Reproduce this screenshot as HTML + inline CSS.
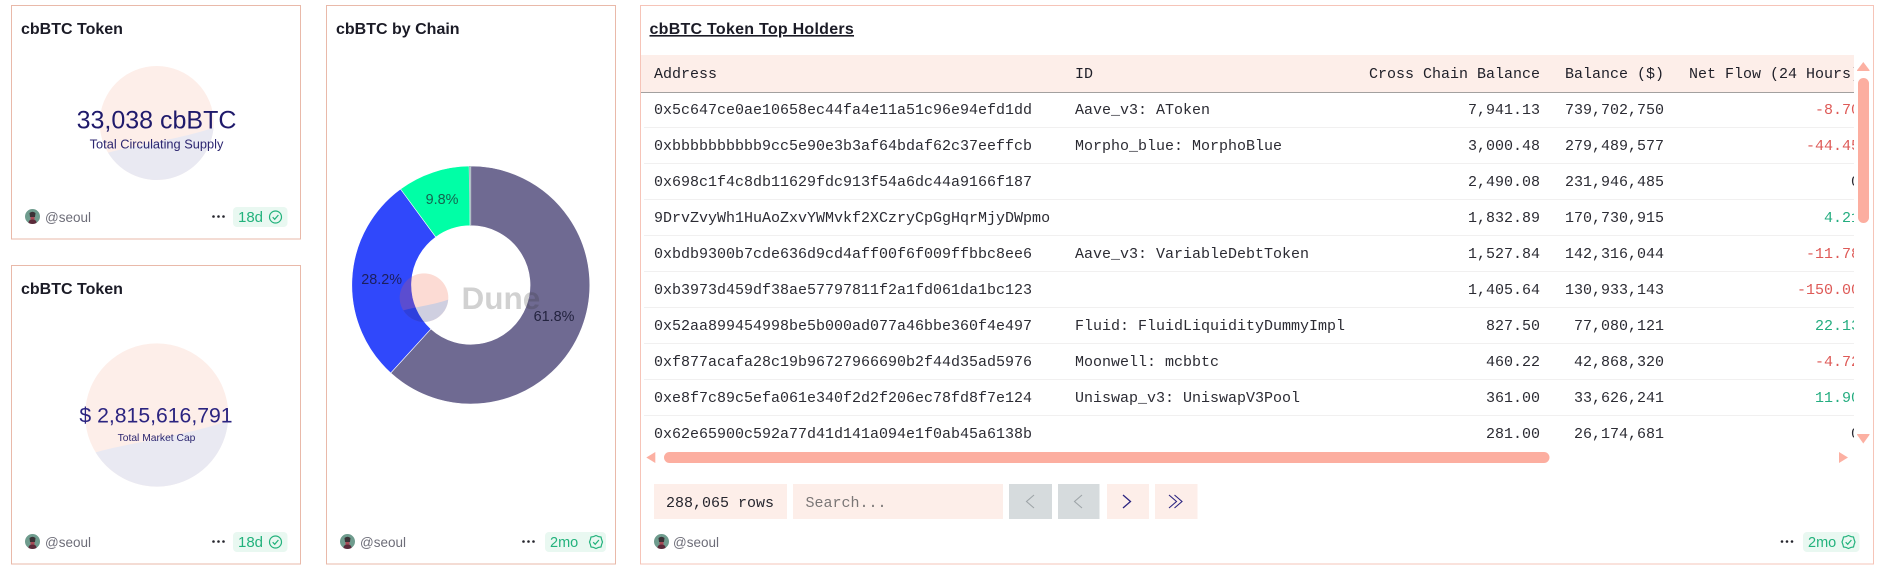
<!DOCTYPE html>
<html>
<head>
<meta charset="utf-8">
<style>
html,body{margin:0;padding:0;background:#fff;width:1882px;height:565px;overflow:hidden}
svg.page{position:absolute;left:0;top:0}
svg text{font-family:"Liberation Sans",sans-serif}
svg text.m{font-family:"Liberation Mono",monospace;font-size:15px}
.ttl{font-size:16px;font-weight:700;fill:#1b1b26}
.usr{font-size:13.5px;fill:#6d6d78}
.bdg{font-size:14.5px;fill:#22b27c}
#tbl{position:absolute;left:641px;top:55px;width:1213px;height:397px;overflow:hidden;font:15px/36px "Liberation Mono",monospace;color:#2b2b33}
#hd{position:absolute;left:0;top:0;width:1213px;height:37px;background:#fdeee9;border-bottom:1.5px solid #a3a09f;color:#1f1f28}
.r{position:absolute;left:3px;width:1213px;height:35px;border-bottom:1px solid #f1f0f0}
#tbl span{position:absolute;top:1px;white-space:nowrap}
.hs{line-height:37px}
.a{left:10px}.i{left:431px}.c{right:317px}.b{right:193px}.n{right:-3px}
.ha{left:13px}.hi{left:434px}.hc{right:314px}.hb{right:190px}.hn{right:-6px}
.neg{color:#de5a57}.pos{color:#25ad80}
</style>
</head>
<body>
<svg class="page" width="1882" height="565" viewBox="0 0 1882 565">
<defs>
<g id="logo">
<circle cx="0" cy="0" r="100" fill="#fdeee9"/>
<path d="M-85.3,52.2 C-45,40 45,28 99.7,8 A100,100 0 0 1 -85.3,52.2 Z" fill="#e9e9f2"/>
</g>
<g id="av">
<circle cx="7.5" cy="7.5" r="7.5" fill="#6f9c8e"/>
<path d="M4.5 4 Q7.5 1.5 10.5 4 L10 8 L5 8 Z" fill="#3b3236"/>
<path d="M5.5 8 H9.5 V11 H5.5 Z" fill="#a84a56"/>
<path d="M3.5 14 Q3.5 10.5 7.5 10.5 Q11.5 10.5 11.5 14 Q7.5 16 3.5 14 Z" fill="#5b2a3a"/>
</g>
<g id="dots" fill="#24242c">
<circle cx="0" cy="0" r="1.3"/><circle cx="5" cy="0" r="1.3"/><circle cx="10" cy="0" r="1.3"/>
</g>
<g id="chk" fill="none" stroke="#22b27c" stroke-width="1.2">
<circle cx="0" cy="0" r="6"/>
<path d="M-2.8 0.2 L-0.8 2.3 L2.9 -2"/>
</g>
<g id="chk2" fill="none" stroke="#22b27c" stroke-width="1.2">
<path d="M0 -6.5 L2.4 -5.4 L5 -5 L5.6 -2.5 L6.5 0 L5.6 2.5 L5 5 L2.4 5.4 L0 6.5 L-2.4 5.4 L-5 5 L-5.6 2.5 L-6.5 0 L-5.6 -2.5 L-5 -5 L-2.4 -5.4 Z"/>
<path d="M-2.8 0.2 L-0.8 2.3 L2.9 -2"/>
</g>
</defs>

<!-- cards -->
<rect x="11.5" y="5.5" width="289" height="233.5" fill="#fff" stroke="#e9b9a9"/>
<rect x="11.5" y="265.5" width="289" height="298.5" fill="#fff" stroke="#e9b9a9"/>
<rect x="326.5" y="5.5" width="289" height="558.5" fill="#fff" stroke="#e9b9a9"/>
<rect x="640.5" y="5.5" width="1233" height="558.5" fill="#fff" stroke="#f6c4b8"/>

<!-- card 1 -->
<text class="ttl" x="21" y="34">cbBTC Token</text>
<use href="#logo" transform="translate(156.7 123) scale(.57)"/>
<text x="156.5" y="128.5" text-anchor="middle" font-size="25" fill="#1f1a6b">33,038 cbBTC</text>
<text x="156.5" y="148.5" text-anchor="middle" font-size="12.8" fill="#2c2670">Total Circulating Supply</text>
<use href="#av" x="25" y="209"/>
<text class="usr" x="45" y="222">@seoul</text>
<use href="#dots" x="213.5" y="216.5"/>
<rect x="233" y="207" width="54.5" height="20" rx="4" fill="#e9f8f1"/>
<text class="bdg" x="238" y="222" font-size="15" style="font-size:15px">18d</text>
<use href="#chk" x="275.5" y="217"/>

<!-- card 2 -->
<text class="ttl" x="21" y="294">cbBTC Token</text>
<use href="#logo" transform="translate(156.7 415) scale(.716)"/>
<text x="156" y="422.5" text-anchor="middle" font-size="21.2" fill="#2b2480">$ 2,815,616,791</text>
<text x="156.5" y="441" text-anchor="middle" font-size="10.3" fill="#2c2670">Total Market Cap</text>
<use href="#av" x="25" y="534"/>
<text class="usr" x="45" y="547">@seoul</text>
<use href="#dots" x="213.5" y="541.5"/>
<rect x="233" y="532" width="54.5" height="20" rx="4" fill="#e9f8f1"/>
<text class="bdg" x="238" y="547" style="font-size:15px">18d</text>
<use href="#chk" x="275.5" y="542"/>

<!-- card 3 -->
<text class="ttl" x="336" y="34">cbBTC by Chain</text>
<g stroke="#fff" stroke-width=".6">
<path d="M470.8 166 A119 119 0 1 1 390.7 373 L430.9 328.9 A59.3 59.3 0 1 0 470.8 225.7 Z" fill="#6f6a92"/>
<path d="M390.7 373 A119 119 0 0 1 400.5 189 L435.8 237.1 A59.3 59.3 0 0 0 430.9 328.9 Z" fill="#3048fb"/>
<path d="M400.5 189 A119 119 0 0 1 469.1 166 L470 225.7 A59.3 59.3 0 0 0 435.8 237.1 Z" fill="#00ffa6"/>
</g>
<path d="M469.1 166 L470.8 166 L470.8 225.7 L470 225.7 Z" fill="#9db1b8"/>
<text x="554" y="321" text-anchor="middle" font-size="14.4" fill="#23233f">61.8%</text>
<text x="381.7" y="284" text-anchor="middle" font-size="14.4" fill="#1c1f5e">28.2%</text>
<text x="442" y="204" text-anchor="middle" font-size="14.4" fill="#14634f">9.8%</text>
<g opacity=".22">
<circle cx="424" cy="297.7" r="24.3" fill="#f4603e"/>
<path d="M403.3 310.4 C413 307.4 435 304.5 448.2 299.6 A24.3 24.3 0 0 1 403.3 310.4 Z" fill="#2b2875"/>
<text x="461.5" y="309" font-size="31.5" font-weight="700" fill="#333">Dune</text>
</g>
<use href="#av" x="340" y="534"/>
<text class="usr" x="360" y="547">@seoul</text>
<use href="#dots" x="523.5" y="541.5"/>
<rect x="545" y="532" width="61" height="20" rx="4" fill="#e9f8f1"/>
<text class="bdg" x="550" y="547">2mo</text>
<use href="#chk2" x="596" y="542"/>

<!-- card 4 -->
<text class="ttl" x="649.5" y="34" text-decoration="underline" style="letter-spacing:.26px">cbBTC Token Top Holders</text>

<!-- scrollbars -->
<path d="M1863.3 62 L1869.4 70 Q1870 71 1869 71 H1857.6 Q1856.6 71 1857.2 70 Z" fill="#fcb0a2"/>
<rect x="1858" y="78" width="11" height="145" rx="5.5" fill="#fcaea0"/>
<path d="M1863.3 443.5 L1869.4 435 Q1870 434 1869 434 H1857.6 Q1856.6 434 1857.2 435 Z" fill="#fcb0a2"/>
<rect x="664" y="452" width="885.5" height="11" rx="5.5" fill="#fcaea0"/>
<path d="M646.3 457.5 L655.3 452 V463 Z" fill="#fcb0a2"/>
<path d="M1848 457.5 L1839 452 V463 Z" fill="#fcb0a2"/>

<!-- controls -->
<rect x="654" y="484" width="133" height="35" fill="#fdeee9"/>
<rect x="793" y="484" width="210" height="35" fill="#fdeee9"/>
<rect x="1009" y="484" width="43" height="35" fill="#d6dbdd"/>
<rect x="1058" y="484" width="41.5" height="35" fill="#d6dbdd"/>
<rect x="1107" y="484" width="42" height="35" fill="#fdeee9"/>
<rect x="1155" y="484" width="42.5" height="35" fill="#fdeee9"/>
<text class="m" x="666" y="507" fill="#26262e">288,065 rows</text>
<text class="m" x="805.5" y="507" fill="#7a7676">Search...</text>
<g fill="none" stroke-width="1.1">
<path d="M1034 495 L1026.5 501.5 L1034 508" stroke="#9ea5a8"/>
<path d="M1082 495 L1074.5 501.5 L1082 508" stroke="#9ea5a8"/>
<path d="M1123 495 L1130.5 501.5 L1123 508" stroke="#2b2480" stroke-width="1.3"/>
<path d="M1169 495 L1176.5 501.5 L1169 508 M1174.5 495 L1182 501.5 L1174.5 508" stroke="#2b2480"/>
</g>
<use href="#av" x="654" y="534"/>
<text class="usr" x="673" y="547">@seoul</text>
<use href="#dots" x="1782" y="541.5"/>
<rect x="1803" y="532" width="56.5" height="20" rx="4" fill="#e9f8f1"/>
<text class="bdg" x="1808" y="547">2mo</text>
<use href="#chk2" x="1848.5" y="542"/>
</svg>

<div id="tbl">
<div id="hd" class="hs">
<span class="ha">Address</span><span class="hi">ID</span><span class="hc">Cross Chain Balance</span><span class="hb">Balance ($)</span><span class="hn">Net Flow (24 Hours)</span>
</div>
<div class="r" style="top:37px"><span class="a">0x5c647ce0ae10658ec44fa4e11a51c96e94efd1dd</span><span class="i">Aave_v3: AToken</span><span class="c">7,941.13</span><span class="b">739,702,750</span><span class="n neg">-8.70</span></div>
<div class="r" style="top:73px"><span class="a">0xbbbbbbbbbb9cc5e90e3b3af64bdaf62c37eeffcb</span><span class="i">Morpho_blue: MorphoBlue</span><span class="c">3,000.48</span><span class="b">279,489,577</span><span class="n neg">-44.45</span></div>
<div class="r" style="top:109px"><span class="a">0x698c1f4c8db11629fdc913f54a6dc44a9166f187</span><span class="c">2,490.08</span><span class="b">231,946,485</span><span class="n">0</span></div>
<div class="r" style="top:145px"><span class="a">9DrvZvyWh1HuAoZxvYWMvkf2XCzryCpGgHqrMjyDWpmo</span><span class="c">1,832.89</span><span class="b">170,730,915</span><span class="n pos">4.21</span></div>
<div class="r" style="top:181px"><span class="a">0xbdb9300b7cde636d9cd4aff00f6f009ffbbc8ee6</span><span class="i">Aave_v3: VariableDebtToken</span><span class="c">1,527.84</span><span class="b">142,316,044</span><span class="n neg">-11.78</span></div>
<div class="r" style="top:217px"><span class="a">0xb3973d459df38ae57797811f2a1fd061da1bc123</span><span class="c">1,405.64</span><span class="b">130,933,143</span><span class="n neg">-150.00</span></div>
<div class="r" style="top:253px"><span class="a">0x52aa899454998be5b000ad077a46bbe360f4e497</span><span class="i">Fluid: FluidLiquidityDummyImpl</span><span class="c">827.50</span><span class="b">77,080,121</span><span class="n pos">22.13</span></div>
<div class="r" style="top:289px"><span class="a">0xf877acafa28c19b96727966690b2f44d35ad5976</span><span class="i">Moonwell: mcbbtc</span><span class="c">460.22</span><span class="b">42,868,320</span><span class="n neg">-4.72</span></div>
<div class="r" style="top:325px"><span class="a">0xe8f7c89c5efa061e340f2d2f206ec78fd8f7e124</span><span class="i">Uniswap_v3: UniswapV3Pool</span><span class="c">361.00</span><span class="b">33,626,241</span><span class="n pos">11.90</span></div>
<div class="r" style="top:361px;border-bottom:0"><span class="a">0x62e65900c592a77d41d141a094e1f0ab45a6138b</span><span class="c">281.00</span><span class="b">26,174,681</span><span class="n">0</span></div>
</div>
</body>
</html>
